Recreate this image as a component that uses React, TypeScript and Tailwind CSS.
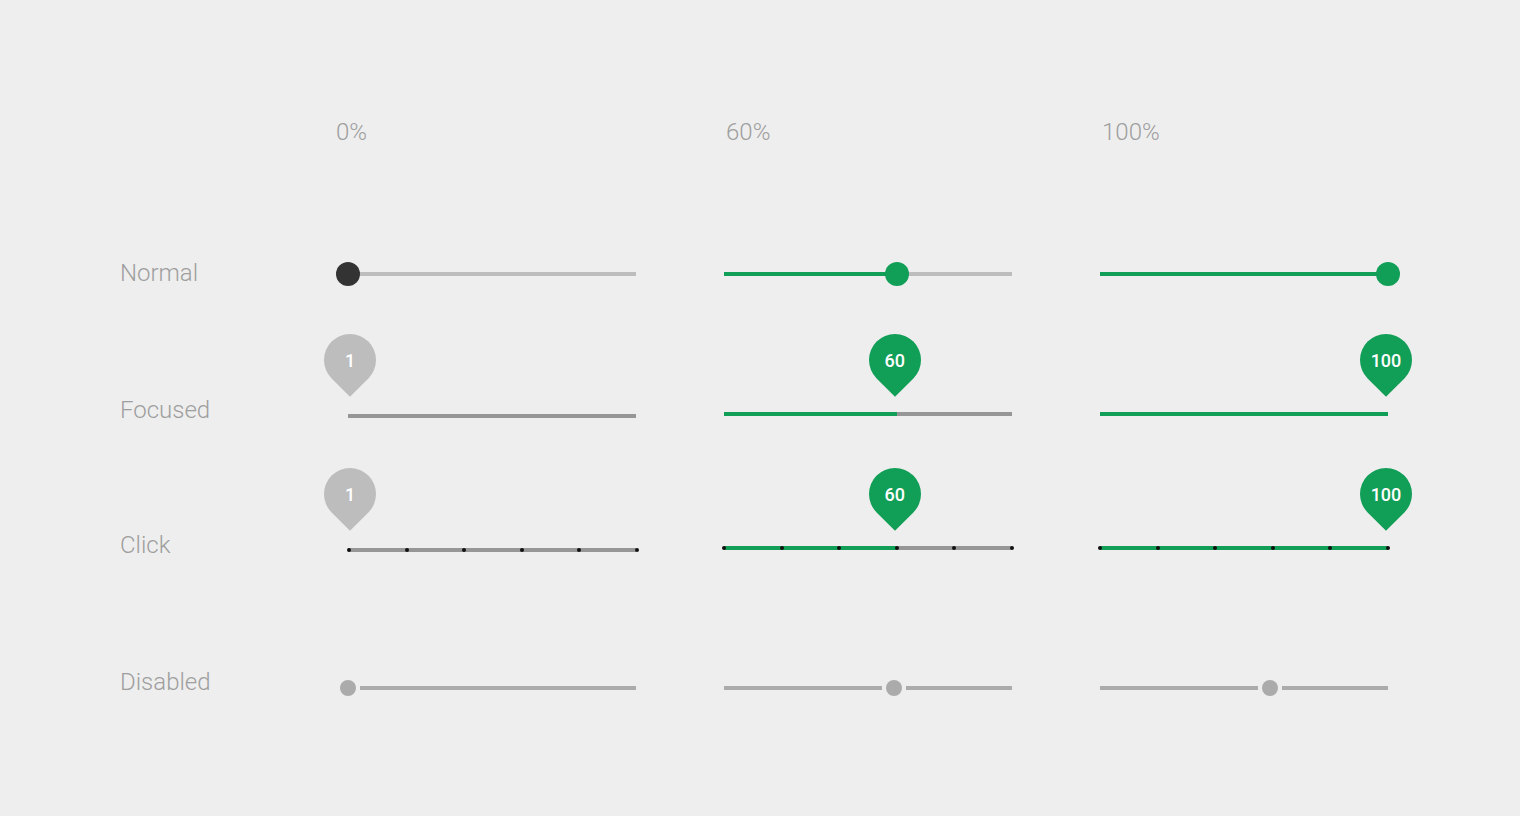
import React from "react";

const TRACK_W = 288;

type Kind = "normal" | "focused" | "click" | "disabled";

function Pin({ value, pos, active }: { value: number; pos: number; active: boolean }) {
  return (
    <div
      className="absolute top-[-56px] w-[52px] h-[52px] -translate-x-1/2"
      style={{ left: pos }}
    >
      <div
        className={`absolute inset-0 -rotate-45 rounded-full rounded-bl-none ${
          active ? "bg-[#119e57]" : "bg-[#bdbdbd]"
        }`}
      />
      <div className="absolute inset-0 flex items-center justify-center text-[18px] font-medium text-white">
        {value}
      </div>
    </div>
  );
}

function Slider({ kind, value, first }: { kind: Kind; value: number; first?: boolean }) {
  const pos = (value / 100) * TRACK_W;
  const active = !first;
  const fill = first ? 0 : pos;

  if (kind === "disabled") {
    const left = pos - 12;
    const shift = Math.min(0, left);
    return (
      <div className="relative w-[288px] h-12 flex items-center">
        <div className="flex items-center" style={{ marginLeft: shift, width: TRACK_W - shift }}>
          <div className="h-1 bg-[#ababab]" style={{ width: Math.max(0, left) }} />
          <span className="mx-1 w-4 h-4 rounded-full bg-[#ababab] shrink-0" />
          <div className="h-1 flex-1 bg-[#ababab]" />
        </div>
      </div>
    );
  }

  if (kind === "normal") {
    return (
      <div className="relative w-[288px] h-12 flex items-center">
        <div className="flex w-full h-1 mt-[2px]">
          <div className="h-full bg-[#119e57]" style={{ width: fill }} />
          <div className="h-full flex-1 bg-[#bdbdbd]" />
        </div>
        <span
          className={`absolute top-1/2 w-6 h-6 -translate-x-1/2 -translate-y-1/2 mt-px rounded-full ${
            first ? "bg-[#333333]" : "bg-[#119e57]"
          }`}
          style={{ left: pos }}
        />
      </div>
    );
  }

  const ticks = [0, 20, 40, 60, 80, 100];
  return (
    <div className="relative w-[288px] h-12 flex items-center">
      <div className={`relative flex w-full h-1 ${first ? "mt-1" : ""}`}>
        <div className="h-full bg-[#119e57]" style={{ width: fill }} />
        <div className="h-full flex-1 bg-[#969696]" />
        {kind === "click" &&
          ticks.map((t) => (
            <span
              key={t}
              className="absolute top-1/2 w-1 h-1 -translate-x-1/2 -translate-y-1/2 rounded-full bg-[#111111]"
              style={{ left: (t / 100) * TRACK_W + (first ? 1 : 0) }}
            />
          ))}
      </div>
      <Pin value={value} pos={first ? 2 : pos - 2} active={active} />
    </div>
  );
}

const rowClass = "grid grid-cols-[228px_376px_376px_288px] items-center h-12";
const labelClass = "text-[24px] text-[#9e9e9e] font-light";
const headClass = "text-[24px] text-[#9e9e9e] font-light";

export default function App() {
  return (
    <div
      className="w-full h-[816px] bg-[#eeeeee] pl-[120px] pt-[108px]"
      style={{ fontFamily: "Roboto, 'Noto Sans', sans-serif" }}
    >
      {/* column headers */}
      <div className={rowClass}>
        <div />
        <div className={`${headClass} ml-[-12px]`}>0%</div>
        <div className={`${headClass} ml-[2px]`}>60%</div>
        <div className={`${headClass} ml-[2px]`}>100%</div>
      </div>

      <div className={`${rowClass} mt-[93px]`}>
        <div className={labelClass}>Normal</div>
        <Slider kind="normal" value={0} first />
        <Slider kind="normal" value={60} />
        <Slider kind="normal" value={100} />
      </div>

      <div className={`${rowClass} mt-[93px]`}>
        <div className={`${labelClass} mb-2`}>Focused</div>
        <Slider kind="focused" value={1} first />
        <Slider kind="focused" value={60} />
        <Slider kind="focused" value={100} />
      </div>

      <div className={`${rowClass} mt-[86px]`}>
        <div className={`${labelClass} mb-[6px]`}>Click</div>
        <Slider kind="click" value={1} first />
        <Slider kind="click" value={60} />
        <Slider kind="click" value={100} />
      </div>

      <div className={`${rowClass} mt-[92px]`}>
        <div className={`${labelClass} mb-3`}>Disabled</div>
        <Slider kind="disabled" value={0} />
        <Slider kind="disabled" value={59} />
        <Slider kind="disabled" value={59} />
      </div>
    </div>
  );
}
